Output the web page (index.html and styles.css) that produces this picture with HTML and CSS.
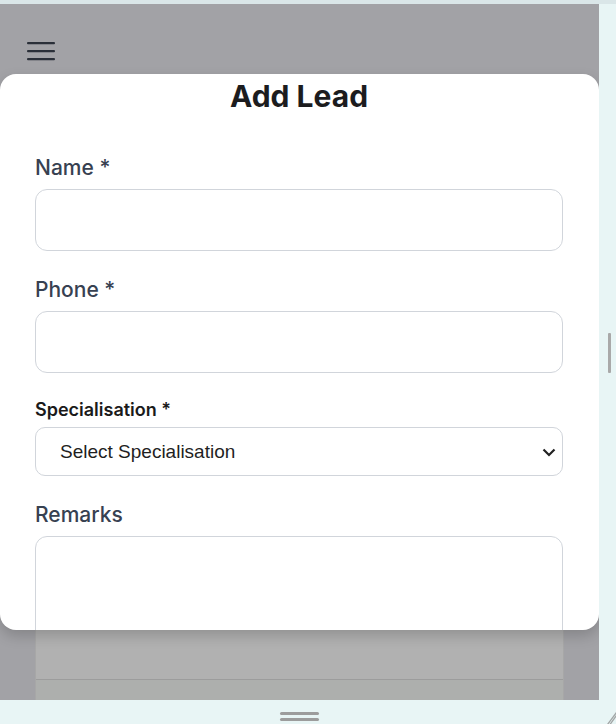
FILE: index.html
```html
<!DOCTYPE html>
<html lang="en">
<head>
<meta charset="utf-8">
<title>Add Lead</title>
<link rel="stylesheet" href="styles.css">
</head>
<body>
<div class="app">
  <div class="topstrip"></div>
  <div class="sidestrip"><div class="scroll-thumb"></div></div>
  <div class="viewport">
    <header class="header">
      <svg class="menu" width="28" height="20" viewBox="0 0 28 20" aria-hidden="true">
        <rect x="0" y="1" width="28" height="2.2" rx="1" fill="#2a2f38"/>
        <rect x="0" y="9" width="28" height="2.2" rx="1" fill="#2a2f38"/>
        <rect x="0" y="17" width="28" height="2.2" rx="1" fill="#2a2f38"/>
      </svg>
    </header>
    <section class="sheet">
      <h1 class="title">Add Lead</h1>
      <div class="field">
        <label class="label">Name *</label>
        <div class="input"></div>
      </div>
      <div class="field">
        <label class="label">Phone *</label>
        <div class="input"></div>
      </div>
      <div class="field">
        <label class="label-strong">Specialisation *</label>
        <div class="select">
          <span>Select Specialisation</span>
          <svg width="14" height="10" viewBox="0 0 14 10" aria-hidden="true"><path d="M1.5 2.5 L7 8 L12.5 2.5" fill="none" stroke="#222" stroke-width="2.2"/></svg>
        </div>
      </div>
      <div class="field">
        <label class="label">Remarks</label>
        <div class="textarea"></div>
      </div>
    </section>
    <div class="under"><div class="under-line"></div></div>
  </div>
  <div class="bottomstrip">
    <div class="grip"><span></span><span></span></div>
    <svg class="resize" width="12" height="14" viewBox="0 0 12 14" aria-hidden="true"><path d="M3.5 14.5 L12.5 2.5 M6 14.5 L12.5 5.5" stroke="#a2a6a6" stroke-width="1.3" fill="none"/></svg>
  </div>
</div>
</body>
</html>
```
FILE: styles.css
```css
* { box-sizing: border-box; }
html, body { margin: 0; padding: 0; }
body {
  width: 616px;
  height: 724px;
  overflow: hidden;
  background: #e8f5f5;
  font-family: Inter, "Noto Sans", sans-serif;
}
.app {
  display: grid;
  grid-template-columns: 599px 17px;
  grid-template-rows: 4px 696px 24px;
  width: 616px;
  height: 724px;
}
.topstrip {
  grid-column: 1 / 3;
  grid-row: 1;
  background: #dae6e8;
}
.sidestrip {
  grid-column: 2;
  grid-row: 2;
  background: #e8f5f5;
  padding-top: 329px;
  padding-left: 9px;
}
.scroll-thumb {
  width: 3px;
  height: 40px;
  background: #a9a9a9;
  border-radius: 1px;
}
.viewport {
  grid-column: 1;
  grid-row: 2;
  background: #a2a2a6;
  display: flex;
  flex-direction: column;
  overflow: hidden;
}
.header {
  height: 70px;
  flex: none;
  padding: 37px 0 0 27px;
}
.menu { display: block; }
.sheet {
  height: 556px;
  flex: none;
  background: #fff;
  border-radius: 16px;
  padding: 4px 36px 0 35px;
  overflow: hidden;
  box-shadow: 0 6px 14px rgba(0,0,0,0.18);
  position: relative;
  z-index: 1;
}
.title {
  margin: 0 0 41px;
  text-align: center;
  font-size: 30px;
  font-weight: 700;
  line-height: 36px;
  color: #1c1c1e;
}
.field { margin-bottom: 26px; }
.label {
  display: block;
  font-size: 21px;
  font-weight: 500;
  line-height: 26px;
  color: #374151;
  margin-bottom: 8px;
}
.input {
  height: 62px;
  border: 1px solid #d1d5db;
  border-radius: 12px;
}
.label-strong {
  display: block;
  font-size: 18px;
  font-weight: 600;
  line-height: 22px;
  color: #1a1a1a;
  margin-bottom: 6px;
}
.select {
  height: 49px;
  border: 1px solid #d1d5db;
  border-radius: 10px;
  display: flex;
  align-items: center;
  justify-content: space-between;
  padding: 0 6px 0 24px;
  font-family: "Liberation Sans", Arial, sans-serif;
  font-size: 19px;
  color: #1f1f1f;
}
.textarea {
  height: 200px;
  border: 1px solid #d1d5db;
  border-radius: 12px;
}
.under {
  margin: 0 35px;
  height: 70px;
  flex: none;
  background: #b1b1b1;
  border-left: 1px solid #a7a7a7;
  border-right: 1px solid #a7a7a7;
  padding-top: 49px;
}
.under-line {
  height: 21px;
  border-top: 1px solid #9c9c9c;
  background: #adafad;
}
.bottomstrip {
  grid-column: 1 / 3;
  grid-row: 3;
  background: #e8f5f5;
  display: flex;
  justify-content: center;
  position: relative;
}
.grip {
  margin-top: 12px;
  margin-right: 17px;
  display: flex;
  flex-direction: column;
  gap: 3px;
}
.grip span {
  display: block;
  width: 39px;
  height: 3px;
  background: #9c9c9c;
  border-radius: 2px;
}
.resize {
  position: absolute;
  right: 0;
  bottom: 0;
}
```
